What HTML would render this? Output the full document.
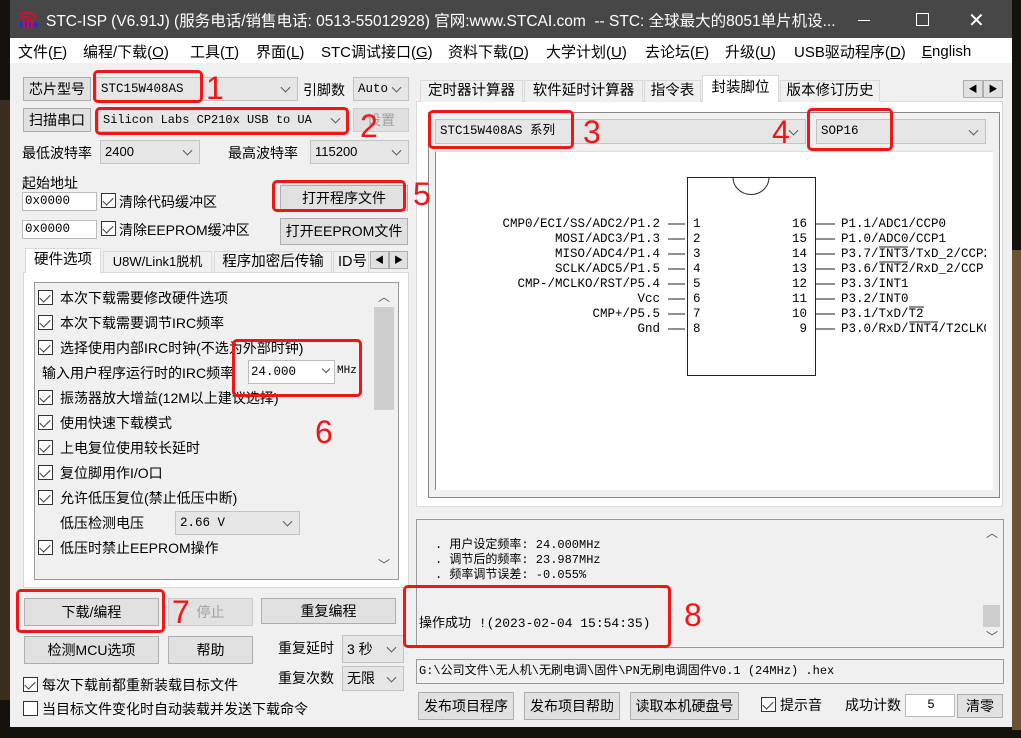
<!DOCTYPE html>
<html><head><meta charset="utf-8"><style>
*{box-sizing:border-box;margin:0;padding:0}
body{width:1021px;height:738px;background:#15110d;position:relative;overflow:hidden;font-family:"Liberation Sans","Noto Sans CJK SC",sans-serif;font-size:14px;color:#000}
.a{position:absolute;white-space:nowrap}
.win{position:absolute;left:10px;top:0;width:1002px;height:727px;background:#f0f0f0}
.title{position:absolute;left:10px;top:0;width:1002px;height:38px;background:#474747}
.menu{position:absolute;left:10px;top:38px;width:1002px;height:25px;background:#fff}
.m{position:absolute;top:41px;font-size:15px;white-space:nowrap}
.btn{position:absolute;background:#e1e1e1;border:1px solid #adadad;text-align:center;font-size:14px;white-space:nowrap}
.cb{position:absolute;background:#e6e6e6;border:1px solid #c2c2c2;font-size:13px;padding-left:4px;white-space:nowrap;overflow:hidden}
.cb:after{content:"";position:absolute;right:8px;top:50%;width:6px;height:6px;border-right:1px solid #555;border-bottom:1px solid #555;transform:translateY(-70%) rotate(45deg)}
.inp{position:absolute;background:#fff;border:1px solid #bbb;font-family:"Liberation Mono",monospace;font-size:12.5px;padding-left:2px;white-space:nowrap}
.chk{position:absolute;width:15px;height:15px;border:1px solid #333;background:#fff}
.chk.on:after{content:"";position:absolute;left:3px;top:1px;width:5px;height:9px;border-right:1.5px solid #333;border-bottom:1.5px solid #333;transform:rotate(45deg)}
.red{position:absolute;border:3px solid #f01616;border-radius:5px}
.num{position:absolute;color:#f01616;font-size:32px;line-height:32px}
.mono{font-family:"Liberation Mono","Noto Sans CJK SC",monospace;font-size:12.5px}
.tab{position:absolute;background:#f0f0f0;border:1px solid #d9d9d9;border-bottom:none;font-size:14.5px;text-align:center;white-space:nowrap;overflow:hidden}
.pin{position:absolute;font-family:"Liberation Mono","Noto Serif CJK SC",monospace;font-size:12.5px;line-height:15px;white-space:nowrap}
</style></head><body>
<div class="a" style="left:0;top:100px;width:10px;height:600px;background:#3a2c1e"></div>
<div class="a" style="left:1012px;top:250px;width:9px;height:480px;background:#6a5434"></div>
<div class="win"></div>
<div class="title"></div>
<svg class="a" style="left:18px;top:8px" width="22" height="22"><g fill="none" stroke="#e03" stroke-width="2"><path d="M2 6 Q12 2 18 10"/><path d="M2 10 Q10 7 14 13"/></g><path d="M2 14h18v5H2z" fill="#23c"/><path d="M6 12v8M10 12v8M14 12v8" stroke="#e03" stroke-width="2"/></svg>
<div class="a" style="left:46px;top:9px;color:#fff;font-size:15.5px">STC-ISP (V6.91J) (服务电话/销售电话: 0513-55012928) 官网:www.STCAI.com&nbsp; -- STC: 全球最大的8051单片机设...</div>
<div class="a" style="left:858px;top:20px;width:12px;height:1px;background:#fff"></div>
<div class="a" style="left:916px;top:13px;width:13px;height:13px;border:1px solid #fff"></div>
<div class="a" style="left:968px;top:8px;color:#fff;font-size:20px">✕</div>
<div class="menu"></div>
<div class="m" style="left:18px">文件(<u>F</u>)</div>
<div class="m" style="left:83px">编程/下载(<u>O</u>)</div>
<div class="m" style="left:190px">工具(<u>T</u>)</div>
<div class="m" style="left:256px">界面(<u>L</u>)</div>
<div class="m" style="left:321px">STC调试接口(<u>G</u>)</div>
<div class="m" style="left:448px">资料下载(<u>D</u>)</div>
<div class="m" style="left:546px">大学计划(<u>U</u>)</div>
<div class="m" style="left:645px">去论坛(<u>F</u>)</div>
<div class="m" style="left:725px">升级(<u>U</u>)</div>
<div class="m" style="left:794px">USB驱动程序(<u>D</u>)</div>
<div class="m" style="left:922px;top:43px"><u>E</u>nglish</div>

<!-- left top -->
<div class="btn" style="left:23px;top:77px;width:68px;height:24px;line-height:22px">芯片型号</div>
<div class="cb mono" style="left:96px;top:77px;width:202px;height:24px;line-height:22px">STC15W408AS</div>
<div class="a" style="left:303px;top:80px">引脚数</div>
<div class="cb mono" style="left:353px;top:77px;width:56px;height:24px;line-height:22px">Auto</div>
<div class="btn" style="left:23px;top:108px;width:68px;height:24px;line-height:22px">扫描串口</div>
<div class="cb mono" style="left:98px;top:108px;width:250px;height:24px;line-height:22px;font-size:12px">Silicon Labs CP210x USB to UA</div>
<div class="btn" style="left:353px;top:108px;width:56px;height:24px;line-height:22px;color:#a0a0a0;border-color:#ccc;background:#e0e0e0">设置</div>
<div class="a" style="left:22px;top:143px">最低波特率</div>
<div class="cb" style="left:100px;top:140px;width:100px;height:24px;line-height:22px">2400</div>
<div class="a" style="left:228px;top:143px">最高波特率</div>
<div class="cb" style="left:310px;top:140px;width:99px;height:24px;line-height:22px">115200</div>
<div class="a" style="left:22px;top:173px">起始地址</div>
<div class="inp" style="left:22px;top:192px;width:75px;height:19px;line-height:17px">0x0000</div>
<div class="chk on" style="left:101px;top:193px"></div>
<div class="a" style="left:119px;top:192px">清除代码缓冲区</div>
<div class="inp" style="left:22px;top:220px;width:75px;height:19px;line-height:17px">0x0000</div>
<div class="chk on" style="left:101px;top:221px"></div>
<div class="a" style="left:119px;top:220px">清除EEPROM缓冲区</div>
<div class="btn" style="left:280px;top:185px;width:128px;height:26px;line-height:24px">打开程序文件</div>
<div class="btn" style="left:280px;top:218px;width:128px;height:27px;line-height:25px">打开EEPROM文件</div>

<!-- left tabs -->
<div class="a" style="left:23px;top:272px;width:386px;height:316px;background:#fff;border:1px solid #d9d9d9"></div>
<div class="tab" style="left:25px;top:248px;width:76px;height:25px;line-height:23px;background:#fff">硬件选项</div>
<div class="tab" style="left:103px;top:251px;width:109px;height:21px;line-height:20px;font-size:13px">U8W/Link1脱机</div>
<div class="tab" style="left:214px;top:251px;width:118px;height:21px;line-height:20px">程序加密后传输</div>
<div class="tab" style="left:333px;top:251px;width:36px;height:21px;line-height:20px;text-align:left;padding-left:4px">ID号</div>
<div class="btn" style="left:370px;top:251px;width:19px;height:18px;font-size:9px;line-height:16px">◀</div>
<div class="btn" style="left:389px;top:251px;width:19px;height:18px;font-size:9px;line-height:16px">▶</div>
<div class="a" style="left:34px;top:282px;width:365px;height:298px;background:#f0f0f0;border:1px solid #999"></div>
<div class="a" style="left:374px;top:307px;width:20px;height:103px;background:#cdcdcd"></div>
<div class="a" style="left:378px;top:288px;font-size:12px;color:#555">︿</div>
<div class="a" style="left:378px;top:556px;font-size:12px;color:#555">﹀</div>
<div class="chk on" style="left:38px;top:290px"></div><div class="a" style="left:60px;top:288px">本次下载需要修改硬件选项</div>
<div class="chk on" style="left:38px;top:315px"></div><div class="a" style="left:60px;top:313px">本次下载需要调节IRC频率</div>
<div class="chk on" style="left:38px;top:340px"></div><div class="a" style="left:60px;top:338px">选择使用内部IRC时钟(不选为外部时钟)</div>
<div class="a" style="left:42px;top:363px">输入用户程序运行时的IRC频率</div>
<div class="inp" style="left:248px;top:360px;width:87px;height:24px;line-height:22px">24.000</div>
<div class="a" style="left:323px;top:366px;width:6px;height:6px;border-right:1px solid #555;border-bottom:1px solid #555;transform:rotate(45deg)"></div>
<div class="a mono" style="left:337px;top:365px;font-size:11px">MHz</div>
<div class="chk on" style="left:38px;top:390px"></div><div class="a" style="left:60px;top:388px">振荡器放大增益(12M以上建议选择)</div>
<div class="chk on" style="left:38px;top:415px"></div><div class="a" style="left:60px;top:413px">使用快速下载模式</div>
<div class="chk on" style="left:38px;top:440px"></div><div class="a" style="left:60px;top:438px">上电复位使用较长延时</div>
<div class="chk on" style="left:38px;top:465px"></div><div class="a" style="left:60px;top:463px">复位脚用作I/O口</div>
<div class="chk on" style="left:38px;top:490px"></div><div class="a" style="left:60px;top:488px">允许低压复位(禁止低压中断)</div>
<div class="a" style="left:60px;top:513px">低压检测电压</div>
<div class="cb mono" style="left:175px;top:511px;width:125px;height:24px;line-height:22px">2.66 V</div>
<div class="chk on" style="left:38px;top:540px"></div><div class="a" style="left:60px;top:538px">低压时禁止EEPROM操作</div>

<!-- left bottom -->
<div class="btn" style="left:24px;top:598px;width:135px;height:28px;line-height:26px">下载/编程</div>
<div class="btn" style="left:168px;top:598px;width:85px;height:28px;line-height:26px;color:#a0a0a0;border-color:#ccc">停止</div>
<div class="btn" style="left:261px;top:598px;width:135px;height:26px;line-height:24px">重复编程</div>
<div class="btn" style="left:24px;top:636px;width:135px;height:28px;line-height:26px">检测MCU选项</div>
<div class="btn" style="left:168px;top:636px;width:85px;height:28px;line-height:26px">帮助</div>
<div class="a" style="left:278px;top:638px">重复延时</div>
<div class="cb" style="left:342px;top:635px;width:62px;height:28px;line-height:26px;font-size:14px">3 秒</div>
<div class="a" style="left:278px;top:668px">重复次数</div>
<div class="cb" style="left:342px;top:666px;width:62px;height:25px;line-height:23px;font-size:14px">无限</div>
<div class="chk on" style="left:23px;top:677px"></div><div class="a" style="left:42px;top:675px">每次下载前都重新装载目标文件</div>
<div class="chk" style="left:23px;top:701px"></div><div class="a" style="left:42px;top:699px">当目标文件变化时自动装载并发送下载命令</div>

<!-- right tabs -->
<div class="a" style="left:416px;top:101px;width:587px;height:406px;background:#fff;border:1px solid #d9d9d9"></div>
<div class="tab" style="left:420px;top:80px;width:103px;height:22px;line-height:21px">定时器计算器</div>
<div class="tab" style="left:524px;top:80px;width:119px;height:22px;line-height:21px">软件延时计算器</div>
<div class="tab" style="left:644px;top:80px;width:57px;height:22px;line-height:21px">指令表</div>
<div class="tab" style="left:702px;top:75px;width:77px;height:27px;line-height:25px;background:#fff">封装脚位</div>
<div class="tab" style="left:780px;top:80px;width:100px;height:22px;line-height:21px">版本修订历史</div>
<div class="btn" style="left:963px;top:80px;width:20px;height:18px;font-size:9px;line-height:16px">◀</div>
<div class="btn" style="left:983px;top:80px;width:20px;height:18px;font-size:9px;line-height:16px">▶</div>
<div class="a" style="left:428px;top:112px;width:572px;height:386px;background:#f0f0f0;border:1px solid #888"></div>
<div class="cb mono" style="left:435px;top:119px;width:371px;height:25px;line-height:23px">STC15W408AS 系列</div>
<div class="cb mono" style="left:816px;top:119px;width:170px;height:25px;line-height:23px">SOP16</div>
<div class="a" style="left:435px;top:151px;width:558px;height:339px;background:#fff;border-left:1px solid #888;border-top:1px solid #ddd"></div>
<svg class="a" style="left:430px;top:170px" width="570" height="210">
<rect x="257.5" y="7.5" width="128" height="198" fill="#fff" stroke="#222"/>
<path d="M303 7.5 A18 17 0 0 0 339 7.5" fill="none" stroke="#222"/>
<g stroke="#222"><path d="M238 54h17M238 69h17M238 84h17M238 99h17M238 114h17M238 129h17M238 144h17M238 159h17M385 54h20M385 69h20M385 84h20M385 99h20M385 114h20M385 129h20M385 144h20M385 159h20"/>
<path d="M449 77h29M449 92h29M479 137h15M479 152h29"/></g>
</svg>
<div class="pin" style="left:440px;top:217px;width:220px;text-align:right">CMP0/ECI/SS/ADC2/P1.2<br>MOSI/ADC3/P1.3<br>MISO/ADC4/P1.4<br>SCLK/ADC5/P1.5<br>CMP-/MCLKO/RST/P5.4<br>Vcc<br>CMP+/P5.5<br>Gnd</div>
<div class="pin" style="left:693px;top:217px">1<br>2<br>3<br>4<br>5<br>6<br>7<br>8</div>
<div class="pin" style="left:779px;top:217px;width:28px;text-align:right">16<br>15<br>14<br>13<br>12<br>11<br>10<br>9</div>
<div class="pin" style="left:841px;top:217px;width:145px;overflow:hidden">P1.1/ADC1/CCP0<br>P1.0/ADC0/CCP1<br>P3.7/INT3/TxD_2/CCP2<br>P3.6/INT2/RxD_2/CCP<br>P3.3/INT1<br>P3.2/INT0<br>P3.1/TxD/T2<br>P3.0/RxD/INT4/T2CLKO</div>

<!-- log -->
<div class="a" style="left:416px;top:519px;width:588px;height:129px;background:#f0f0f0;border:1px solid #999"></div>
<div class="a" style="left:983px;top:605px;width:17px;height:22px;background:#cdcdcd"></div>
<div class="a" style="left:986px;top:524px;font-size:12px;color:#555">︿</div>
<div class="a" style="left:986px;top:628px;font-size:12px;color:#555">﹀</div>
<div class="a mono" style="left:435px;top:538px;line-height:15px;font-size:12px">. 用户设定频率: 24.000MHz<br>. 调节后的频率: 23.987MHz<br>. 频率调节误差: -0.055%</div>
<div class="a mono" style="left:419px;top:612px;font-size:13px">操作成功 !(2023-02-04 15:54:35)</div>
<div class="inp" style="left:416px;top:659px;width:588px;height:25px;line-height:23px;background:#f0f0f0;border-color:#999;font-size:12px">G:\公司文件\无人机\无刷电调\固件\PN无刷电调固件V0.1 (24MHz) .hex</div>
<div class="btn" style="left:418px;top:692px;width:96px;height:28px;line-height:26px">发布项目程序</div>
<div class="btn" style="left:524px;top:692px;width:96px;height:28px;line-height:26px">发布项目帮助</div>
<div class="btn" style="left:630px;top:692px;width:109px;height:28px;line-height:26px">读取本机硬盘号</div>
<div class="chk on" style="left:761px;top:697px"></div><div class="a" style="left:780px;top:695px">提示音</div>
<div class="a" style="left:845px;top:695px">成功计数</div>
<div class="inp" style="left:905px;top:694px;width:50px;height:23px;line-height:21px;text-align:center">5</div>
<div class="btn" style="left:957px;top:694px;width:46px;height:24px;line-height:22px">清零</div>

<!-- red annotations -->
<div class="red" style="left:93px;top:70px;width:110px;height:33px"></div>
<div class="num" style="left:206px;top:72px">1</div>
<div class="red" style="left:95px;top:107px;width:254px;height:28px"></div>
<div class="num" style="left:360px;top:110px">2</div>
<div class="red" style="left:272px;top:180px;width:134px;height:32px"></div>
<div class="num" style="left:413px;top:178px">5</div>
<div class="red" style="left:232px;top:339px;width:130px;height:58px"></div>
<div class="num" style="left:315px;top:416px">6</div>
<div class="red" style="left:16px;top:589px;width:149px;height:44px"></div>
<div class="num" style="left:172px;top:596px">7</div>
<div class="red" style="left:428px;top:110px;width:146px;height:39px"></div>
<div class="num" style="left:583px;top:116px">3</div>
<div class="red" style="left:807px;top:108px;width:86px;height:43px"></div>
<div class="num" style="left:772px;top:116px">4</div>
<div class="red" style="left:403px;top:585px;width:268px;height:63px"></div>
<div class="num" style="left:684px;top:599px">8</div>
</body></html>
